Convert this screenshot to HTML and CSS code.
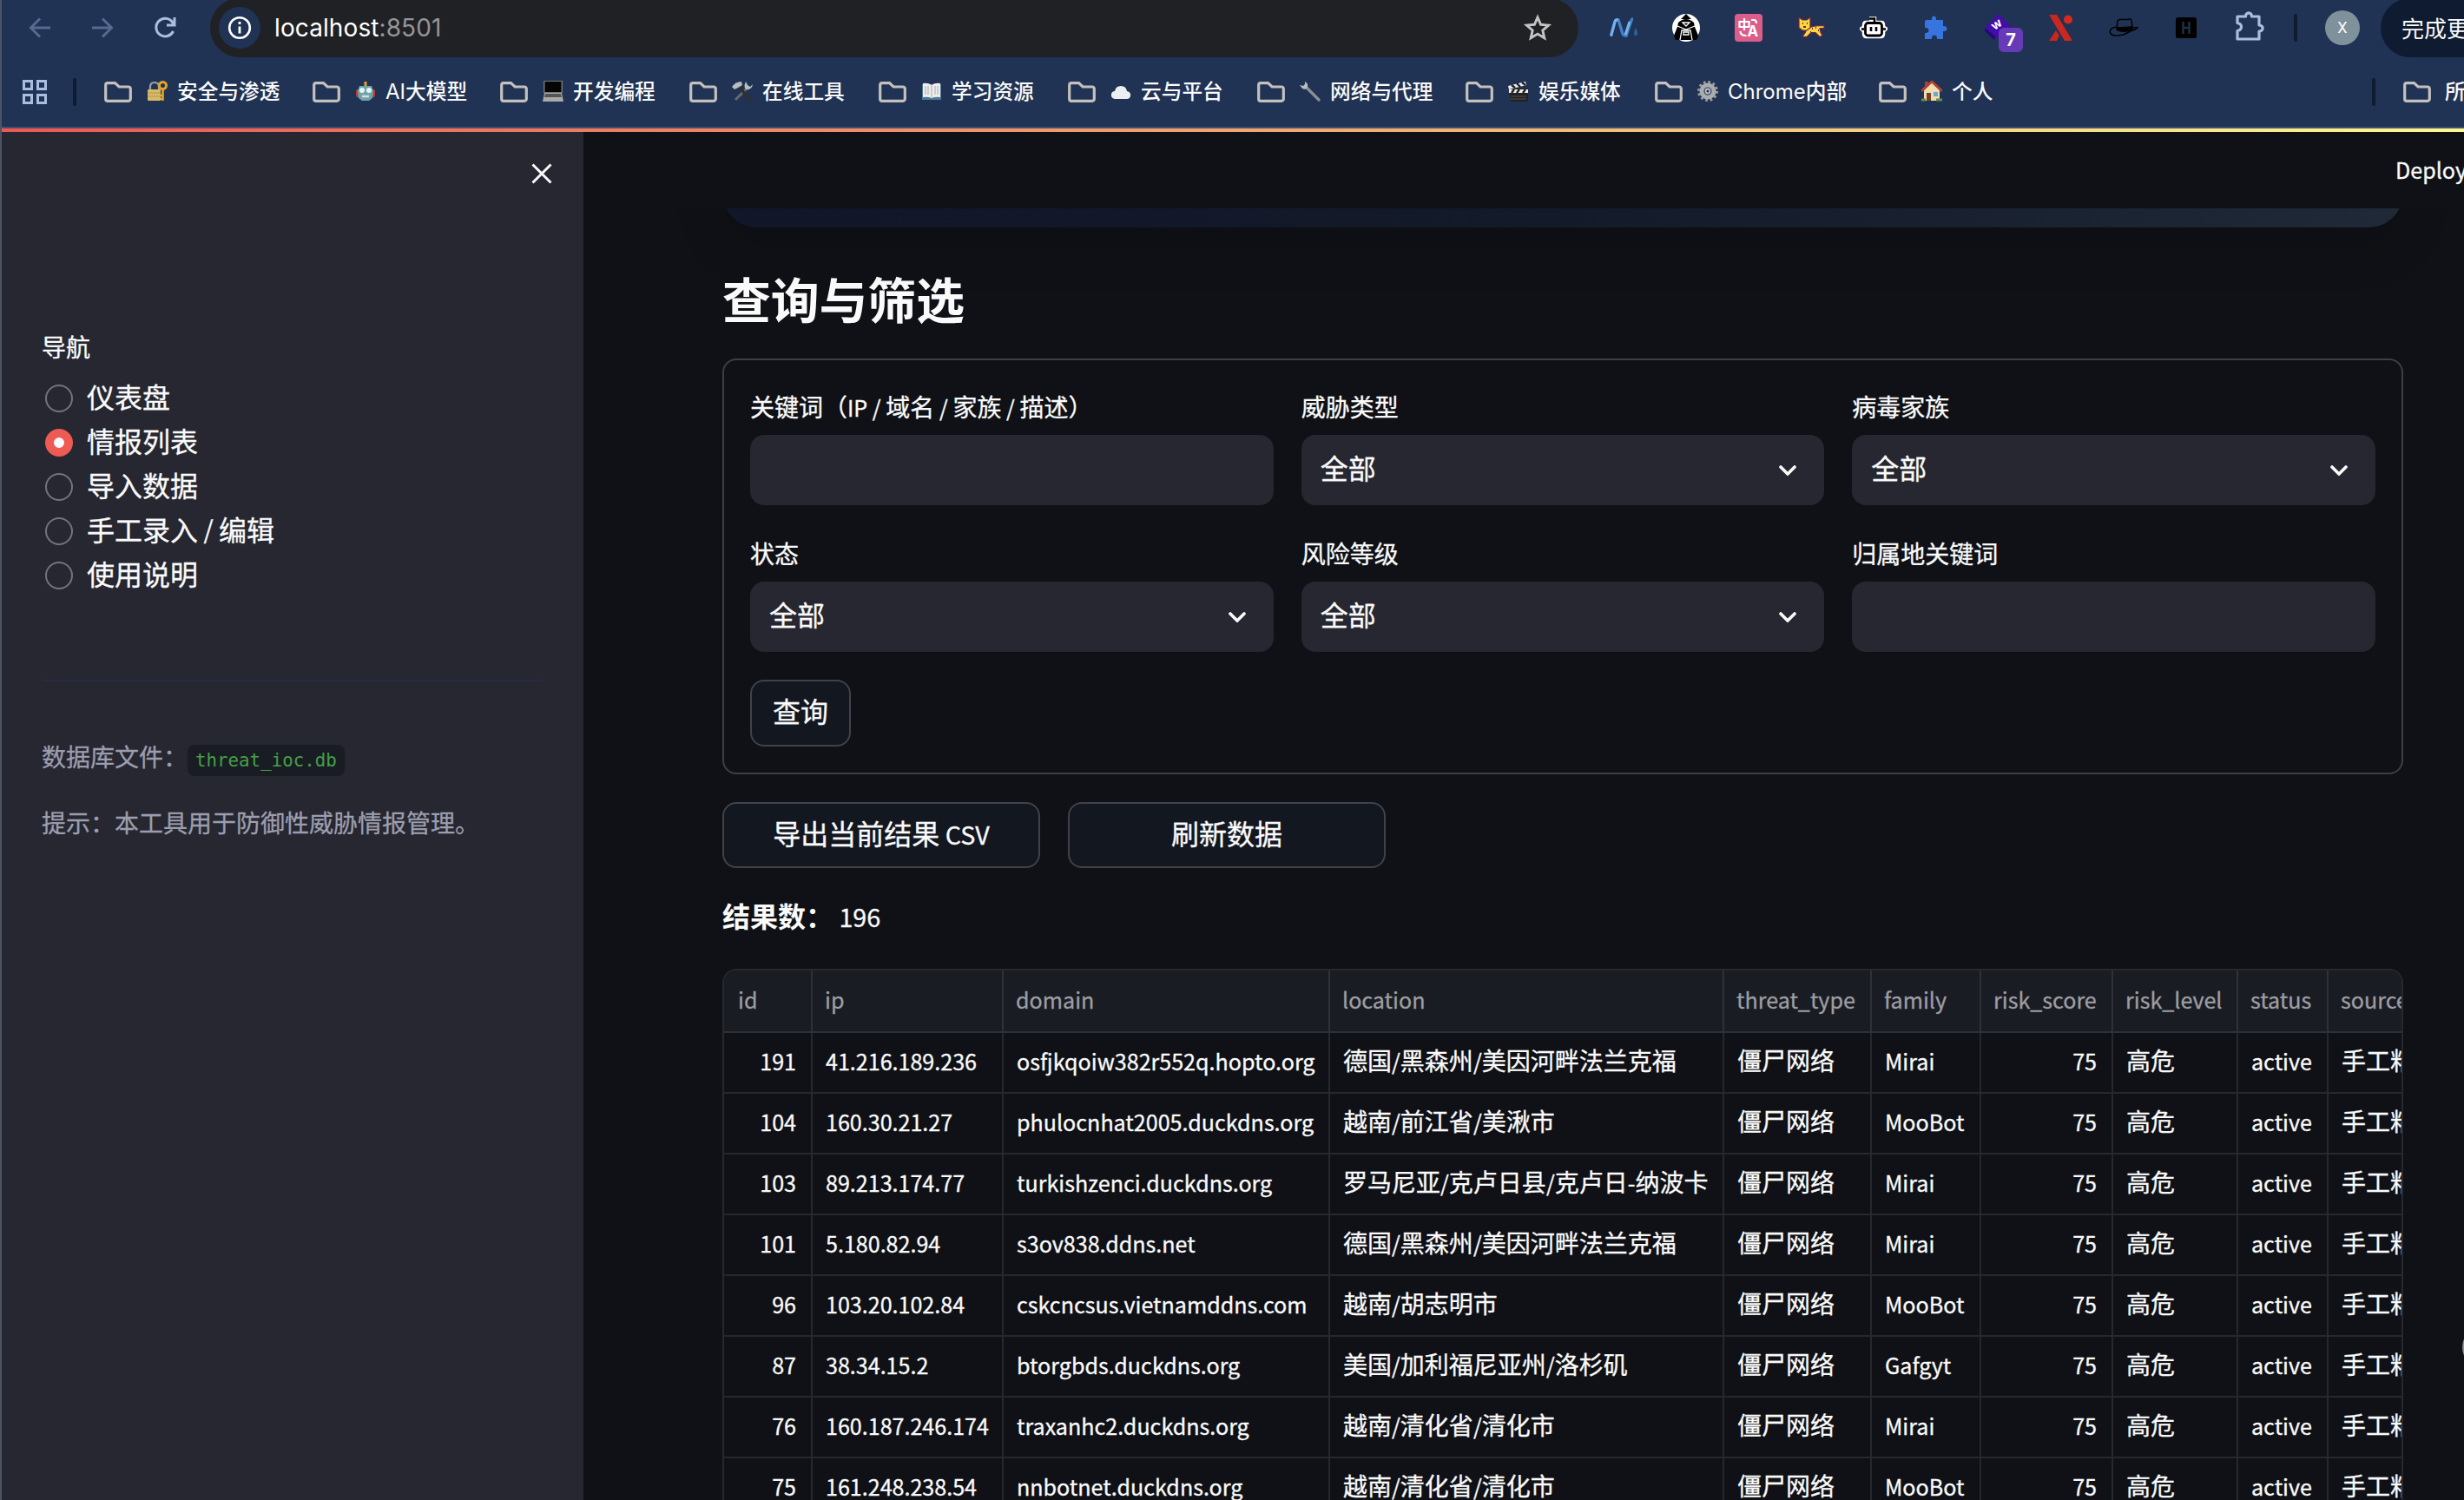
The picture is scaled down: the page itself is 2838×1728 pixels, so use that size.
FILE: index.html
```html
<!DOCTYPE html>
<html lang="zh-CN">
<head>
  <meta charset="UTF-8" />
  <meta name="viewport" content="width=device-width, initial-scale=1.0" />
  <title>威胁情报管理</title>
  <link rel="stylesheet" href="styles.css">
</head>
<body>
<svg class="symbols" width="0" height="0">
  <symbol id="folder" viewBox="0 0 32 24"><path d="M4 1.7h8.5l4.6 4.3H28a2.3 2.3 0 0 1 2.3 2.3V20a2.3 2.3 0 0 1-2.3 2.3H4A2.3 2.3 0 0 1 1.7 20V4A2.3 2.3 0 0 1 4 1.7z" fill="none" stroke="#c4c1bd" stroke-width="3.2"/></symbol>
  <symbol id="chevron" viewBox="0 0 20 12"><path d="M2 2l8 8 8-8" fill="none" stroke="#fafafa" stroke-width="3.6" stroke-linecap="round"/></symbol>
</svg>

<div class="window">
  <div class="toolbar">
    <div class="slot"><svg class="nav-icon dim" width="26" height="24" viewBox="0 0 26 24"><path d="M13 1.500L2.500 12 13 22.500M2.500 12H25"/></svg></div>
    <div class="slot"><svg class="nav-icon dim" width="26" height="24" viewBox="0 0 26 24"><path d="M13 1.500L23.500 12 13 22.500M23.500 12H1"/></svg></div>
    <div class="slot"><svg class="nav-icon" width="26" height="26" viewBox="0 0 26 26"><path d="M22.500 17A10.300 10.300 0 1 1 21.500 6.500L23.500 9M24 1v9h-9"/></svg></div>
    <div class="address">
      <span class="site-info"><svg width="28" height="28" viewBox="0 0 28 28"><circle cx="14" cy="14" r="11.800" fill="none" stroke="#fff" stroke-width="2.600"/><path d="M14 12.500v8M14 7v3" stroke="#fff" stroke-width="2.800"/></svg></span>
      <span class="url">localhost<em>:8501</em></span>
      <svg class="star" width="34" height="32" viewBox="0 0 34 32"><path d="M17 4l3.600 8.300 9 .8-6.800 5.900 2 8.800L17 23.100l-7.800 4.700 2-8.800-6.800-5.900 9-.8z" fill="none" stroke="#c4c4c4" stroke-width="2.900"/></svg>
    </div>
    <div class="extensions">
      <div class="slot"><svg width="32" height="24" viewBox="0 0 32 24"><path d="M1.500 21.500L6 5q1-3 4-2l5 16q1 2 4 2l5-15q1-4 3-4" fill="none" stroke="#3f82c8" stroke-width="3.400"/><path d="M1.500 21.500L6 5q1-3 4-2M18 20L23 5" fill="none" stroke="#76b2ee" stroke-width="3"/><path d="M30 12q4 9 0 9t0-9z" fill="#2a679f"/></svg></div>
      <div class="slot"><svg width="32" height="32" viewBox="0 0 32 32"><circle cx="16" cy="16" r="16" fill="#fff"/><path d="M10 6l6-6 6 6zM7 10q9-8 18 0l1 5 4 10-2 5H4l-2-5 4-10z"/><path d="M12 10h8l-4 4zM6 14l10 4 10-4M9 30l2-11h10l2 11M13 21h6v3h-6z" fill="none" stroke="#fff" stroke-width="1.300"/></svg></div>
      <div class="slot"><svg width="32" height="32" viewBox="0 0 32 32"><rect width="32" height="32" rx="4" fill="#db5d89"/><path d="M5.500 9h11v6h-11zM11 5v14M19 7h3q3 0 3 4M6.500 20q0 5 7 5" fill="none" stroke="#fff" stroke-width="2.200"/><text x="14.500" y="26" class="glyph glyph-a">A</text></svg></div>
      <div class="slot"><svg width="32" height="26" viewBox="0 0 32 26"><g fill="#f8d93c" stroke="#762345" stroke-width="1.200"><path d="M12 13l9-2 10-.5v3h-5l1 5 2 3-3 2-5-5-5 0-5 5-5-.5 3-4z"/><path d="M2 1l4 3h5l4-3v12l-4 3H6l-4-3z"/></g><path d="M6 8h1M11 8h1M7 12h3M17 14h1M21 13h1M24 16h1M15 18h1" stroke="#762345" stroke-width="2"/></svg></div>
      <div class="slot"><svg width="32" height="28" viewBox="0 0 32 28"><path d="M11 3.500h6V8M7 8h18q2 0 2 3v2l3 2-3 3v3q0 3-3 3H8q-3 0-3-3v-3l-3-3 3-2v-2q0-3 2-3z" fill="#fff" stroke="#fff" stroke-width="4.500"/><path d="M11 3.500h6V8M2 15.500h3M27 15.500h3" stroke="#000" stroke-width="2.500" fill="none"/><rect x="6.500" y="8.500" width="19" height="14.500" rx="3" fill="#fff" stroke="#000" stroke-width="2.800"/><path d="M13 13v5M19 13v5" stroke="#000" stroke-width="2.600"/></svg></div>
      <div class="slot"><svg width="28" height="28" viewBox="0 0 28 28"><path d="M3 5h6c-1-6 6-6 5 0h8v7c6-1 6 7 0 6v9h-7c1-6-7-6-6 0H1v-7c6 1 6-7 0-6V7q0-2 2-2z" fill="#3874e0"/></svg></div>
      <div class="slot badge-slot"><svg width="32" height="32" viewBox="0 0 32 32"><path d="M0 17L15 3v13l-4 14L0 20z" fill="#230a72"/><path d="M0 16L16 0l16 16-16 13z" fill="#430da7"/><text x="8" y="17" class="glyph glyph-w" transform="rotate(-35 13 13)">w</text></svg><span class="badge">7</span></div>
      <div class="slot"><svg width="30" height="32" viewBox="0 0 30 32"><path d="M1 1h9l18 30h-9z" fill="#c9281f"/><path d="M1 31l8-12 4 6-3 6z" fill="#c9281f"/><circle cx="23" cy="6.500" r="5" fill="#d52b1e"/></svg></div>
      <div class="slot"><svg width="34" height="22" viewBox="0 0 34 22"><path d="M9 11L10 3q1-2 4-1.500h8q3-1.500 4 .5l1 8z" fill="none" stroke="#000" stroke-width="1.500"/><path d="M9 9.500q9 3 18-.5l.5 5q-10 4-19 0z"/><path d="M8 10Q0 12 1.500 17q3 5 15 2 5-2 9-4.500 7-2 7.500-4l-5 .5" fill="none" stroke="#000" stroke-width="1.500"/></svg></div>
      <div class="slot"><svg width="24" height="24" viewBox="0 0 24 24"><rect width="24" height="24" rx="2.500"/><path d="M8.500 5v14M15.500 5v14M8.500 12h7" stroke="#223044" stroke-width="2.400"/></svg></div>
      <div class="slot"><svg class="puzzle" width="34" height="34" viewBox="0 0 34 34"><path d="M3 6h9.500c0-5.500 7-5.500 7 0H28v10c5.500 0 5.500 7 0 7v9H3v-9.500c6-1 6-8 0-9z" fill="none" stroke="#a9bee0" stroke-width="3.200" stroke-linejoin="round"/></svg></div>
    </div>
    <span class="divider"></span>
    <span class="avatar">X</span>
    <span class="update">完成更新</span>
  </div>

  <div class="bookmarks">
    <svg class="apps" width="28" height="28" viewBox="0 0 28 28"><path d="M1.500 1.500h9v9h-9zM17.500 1.500h9v9h-9zM1.500 17.500h9v9h-9zM17.500 17.500h9v9h-9z" fill="none" stroke="#a9bee0" stroke-width="3"/></svg>
    <span class="divider"></span>
    <div class="bookmark-list">
      <a class="bookmark"><svg class="folder"><use href="#folder"/></svg>
        <svg class="emoji" viewBox="0 0 24 24"><path d="M4 11V7q0-5 5-5t5 5v4" fill="none" stroke="#9da3a5" stroke-width="2.200"/><rect x="1" y="10" width="15" height="13" rx="1" fill="#d7ba66"/><path d="M1 14h15M1 18h15" stroke="#b2944a"/><circle cx="18.500" cy="5.500" r="4" fill="none" stroke="#e5a329" stroke-width="3"/><path d="M18.500 9v14M19 17h-3M19 21h-3" stroke="#e5a329" stroke-width="2.600"/></svg><span>安全与渗透</span></a>
      <a class="bookmark"><svg class="folder"><use href="#folder"/></svg>
        <svg class="emoji" viewBox="0 0 24 24"><path d="M12 1v6" stroke="#e0a22e" stroke-width="3"/><rect x="1" y="10" width="22" height="9" rx="2" fill="#c43b35"/><path d="M5 6h14l2 6-1 8-4 3H8l-4-3-1-8z" fill="#69a6ad"/><circle cx="8" cy="11" r="3" fill="#e8f5f6"/><circle cx="16" cy="11" r="3" fill="#e8f5f6"/><path d="M8 18h8" stroke="#e8d7d7" stroke-width="2.500"/></svg><span><span class="latin">AI</span>大模型</span></a>
      <a class="bookmark"><svg class="folder"><use href="#folder"/></svg>
        <svg class="emoji" viewBox="0 0 24 24"><path d="M1 0h22v14H1z" fill="#777"/><path d="M2.500 1h19v12h-19z" fill="#050505"/><path d="M2 14h20l2 10H0z" fill="#aaa"/><path d="M3 15h18l1 4H2z" fill="#555"/></svg><span>开发编程</span></a>
      <a class="bookmark"><svg class="folder"><use href="#folder"/></svg>
        <svg class="emoji" viewBox="0 0 24 24"><path d="M17 9L4 22" stroke="#656b70" stroke-width="3"/><path d="M8 6l13 17" stroke="#332f2c" stroke-width="3.400"/><path d="M0 7q4-6 11-6l1 4-5 3-4 2z" fill="#b7bec2"/><path d="M16 1q-3 6 0 9 7 1 8-6l-3 3-3-2z" fill="#b7bec2"/></svg><span>在线工具</span></a>
      <a class="bookmark"><svg class="folder"><use href="#folder"/></svg>
        <svg class="emoji" viewBox="0 0 24 24"><path d="M1 4h22v18H1z" fill="#4f7894"/><path d="M2 3q6-1 10 2 4-3 10-2v16q-6-1-10 1-4-2-10-1z" fill="#eee"/><path d="M12 5v14M5 6v10M8 6v10M16 6v10M19 6v10" stroke="#aaa"/></svg><span>学习资源</span></a>
      <a class="bookmark"><svg class="folder"><use href="#folder"/></svg>
        <svg class="emoji" viewBox="0 0 24 24"><path d="M5 21q-5-1-4-6 1-3 4-3 1-6 7-6t7 6q5 1 4 6-1 3-4 3z" fill="#eceff1"/></svg><span>云与平台</span></a>
      <a class="bookmark"><svg class="folder"><use href="#folder"/></svg>
        <svg class="emoji" viewBox="0 0 24 24"><path d="M7 7l15 15" stroke="#8e8f95" stroke-width="3.200" stroke-linecap="round"/><path d="M6 1q4 2 3 6t-6 2L0 5l4 1 2-2z" fill="#b7bec2"/></svg><span>网络与代理</span></a>
      <a class="bookmark"><svg class="folder"><use href="#folder"/></svg>
        <svg class="emoji" viewBox="0 0 24 24"><path d="M1 9h22v15H3z" fill="#222"/><path d="M0 6l20-5 1 4L1 10zM1 10h22v4H1z" fill="#eee"/><path d="M4 5l4 3M10 3l4 4M16 2l4 3M7 10l-3 4M13 10l-3 4M20 10l-3 4" stroke="#222" stroke-width="2.400"/><path d="M3 18h18M3 21h18" stroke="#555"/></svg><span>娱乐媒体</span></a>
      <a class="bookmark"><svg class="folder"><use href="#folder"/></svg>
        <svg class="emoji" viewBox="0 0 24 24"><circle cx="12" cy="12" r="10.500" fill="none" stroke="#9a9da0" stroke-width="3" stroke-dasharray="2.750 2.750"/><circle cx="12" cy="12" r="7" fill="none" stroke="#aaadb0" stroke-width="5"/><circle cx="12" cy="12" r="2.500" fill="none" stroke="#c0c3c5" stroke-width="1.800"/></svg><span><span class="latin">Chrome</span>内部</span></a>
      <a class="bookmark"><svg class="folder"><use href="#folder"/></svg>
        <svg class="emoji" viewBox="0 0 24 24"><path d="M3 11l9-9 9 9v12H3z" fill="#eddcb4"/><path d="M0 12L12 1l12 11" fill="none" stroke="#b5422f" stroke-width="2.800"/><path d="M4 1h4v5H4z" fill="#a8442f"/><path d="M6 14h5v9H6z" fill="#7b3d24"/><path d="M14 13h5v5h-5z" fill="#6aa7d2"/><path d="M0 22h5M17 22h7" stroke="#5c9440" stroke-width="3"/></svg><span>个人</span></a>
    </div>
    <span class="divider"></span>
    <a class="all-bookmarks"><svg class="folder"><use href="#folder"/></svg><span>所有书签</span></a>
  </div>

  <div class="decoration"></div>

  <div class="app">
    <aside class="sidebar">
      <div class="sidebar-header">
        <svg width="24" height="24" viewBox="0 0 24 24"><path d="M1.500 1.500l21 21M22.500 1.500l-21 21" stroke="#fafafa" stroke-width="3"/></svg>
      </div>
      <p class="nav-label">导航</p>
      <ul class="radio-group">
        <li><i class="radio"></i>仪表盘</li>
        <li><i class="radio checked"></i>情报列表</li>
        <li><i class="radio"></i>导入数据</li>
        <li><i class="radio"></i>手工录入<span class="en">&nbsp;/&nbsp;</span>编辑</li>
        <li><i class="radio"></i>使用说明</li>
      </ul>
      <hr>
      <p class="caption">数据库文件：<code>threat_ioc.db</code></p>
      <p class="caption">提示：本工具用于防御性威胁情报管理。</p>
    </aside>

    <main class="main">
      <header class="app-header"><span class="en">Deploy</span></header>
      <div class="hero-clip"><div class="hero"></div></div>
      <h2>查询与筛选</h2>

      <form class="filters">
        <div class="fields">
          <div class="field"><label>关键词（<span class="en">IP / </span>域名<span class="en"> / </span>家族<span class="en"> / </span>描述）</label><div class="input"></div></div>
          <div class="field"><label>威胁类型</label><div class="input"><span>全部</span><svg class="chevron"><use href="#chevron"/></svg></div></div>
          <div class="field"><label>病毒家族</label><div class="input"><span>全部</span><svg class="chevron"><use href="#chevron"/></svg></div></div>
          <div class="field"><label>状态</label><div class="input"><span>全部</span><svg class="chevron"><use href="#chevron"/></svg></div></div>
          <div class="field"><label>风险等级</label><div class="input"><span>全部</span><svg class="chevron"><use href="#chevron"/></svg></div></div>
          <div class="field"><label>归属地关键词</label><div class="input"></div></div>
        </div>
        <button type="button" class="btn btn-query">查询</button>
      </form>

      <div class="actions">
        <button type="button" class="btn">导出当前结果<span class="en">&nbsp;CSV</span></button>
        <button type="button" class="btn">刷新数据</button>
      </div>

      <p class="count"><b>结果数：</b><span class="en"> 196</span></p>

      <div class="table-wrap">
        <table>
          <colgroup>
            <col class="c-id"><col class="c-ip"><col class="c-domain"><col class="c-location"><col class="c-type">
            <col class="c-family"><col class="c-score"><col class="c-level"><col class="c-status"><col class="c-source">
          </colgroup>
          <thead>
            <tr><th>id</th><th>ip</th><th>domain</th><th>location</th><th>threat_type</th><th>family</th><th>risk_score</th><th>risk_level</th><th>status</th><th>source</th></tr>
          </thead>
          <tbody id="rows"></tbody>
        </table>
      </div>
    </main>
  </div>
  <span class="edge-handle"></span>
</div>

<script src="script.js"></script>
</body>
</html>
```

FILE: styles.css
```css
:root {
  --chrome: #203354;
  --chrome-dark: #0e1b31;
  --bg: #0f1116;
  --panel: #262730;
  --text: #fafafa;
  --line: #3e3f45;
  --grid: #27282e;
}

* {
  box-sizing: border-box;
}

body {
  margin: 0;
  background: var(--bg);
  color: var(--text);
  font-family: 'Noto Sans CJK SC', 'Noto Sans', sans-serif;
}

p, h2, ul {
  margin: 0;
  padding: 0;
}

.symbols {
  position: absolute;
}

.window {
  position: relative;
  width: 2838px;
  height: 1728px;
  overflow: hidden;
  border-left: 2px solid #4d5361;
}

/* latin runs are set a little smaller than the chinese around them */
.en {
  font-size: 0.896em;
  line-height: 1;
  white-space: pre;
}

/* browser toolbar */
.toolbar {
  display: flex;
  align-items: center;
  height: 66px;
  padding: 0 0 2px 8px;
  background: var(--chrome);
}

.slot {
  flex: none;
  display: flex;
  justify-content: center;
  align-items: center;
  width: 72px;
  height: 48px;
}

.nav-icon {
  fill: none;
  stroke: #a9bee0;
  stroke-width: 3;
}

.nav-icon.dim {
  stroke: #566b90;
}

.address {
  flex: none;
  display: flex;
  align-items: center;
  width: 1576px;
  height: 68px;
  margin: 0 16px;
  padding: 0 30px 0 10px;
  border-radius: 34px;
  background: #202124;
}

.site-info {
  display: flex;
  justify-content: center;
  align-items: center;
  width: 48px;
  height: 48px;
  border-radius: 50%;
  background: var(--chrome);
}

.url {
  margin-left: 16px;
  font: 28px Inter, sans-serif;
  letter-spacing: 0.1px;
  color: #fff;
}

.url em {
  font-style: normal;
  color: #949598;
}

.star {
  margin-left: auto;
}

.extensions {
  flex: none;
  display: flex;
}

.puzzle {
  margin: -4px 0 0 2px;
}

.glyph {
  font-family: Inter, sans-serif;
  font-weight: bold;
  fill: #fff;
}

.glyph-a { font-size: 17px; }
.glyph-w { font-size: 14px; }

.badge-slot {
  position: relative;
}

.badge {
  position: absolute;
  left: 36px;
  top: 24px;
  width: 28px;
  height: 28px;
  border-radius: 6px;
  background: #673ab7;
  font: bold 20px/28px Inter, sans-serif;
  text-align: center;
}

.divider {
  flex: none;
  width: 4px;
  height: 32px;
  border-radius: 2px;
  background: var(--chrome-dark);
}

.extensions + .divider {
  margin: 0 32px 0 16px;
}

.avatar {
  flex: none;
  width: 40px;
  height: 40px;
  margin-right: 24px;
  border-radius: 50%;
  background: #7f919b;
  font: 18px/40px Roboto, sans-serif;
  text-align: center;
}

.update {
  flex: none;
  width: 180px;
  height: 68px;
  padding-left: 24px;
  border-radius: 34px;
  background: var(--chrome-dark);
  font-size: 26px;
  line-height: 68px;
}

/* bookmarks bar */
.bookmarks {
  display: flex;
  align-items: center;
  height: 82px;
  padding-left: 24px;
  background: var(--chrome);
  border-bottom: 2px solid #435170;
  font-size: 23.7px;
  font-weight: 500;
  white-space: nowrap;
}

.apps {
  flex: none;
}

.bookmarks > .divider {
  margin: 0 32px 0 30px;
}

.bookmark-list {
  flex: none;
  display: grid;
  grid-template-columns: 240px 216px 218px 218px 218px 218px 240px 218px 258px 140px;
  width: 2612px;
}

.bookmark, .all-bookmarks {
  display: flex;
  align-items: center;
}

.bookmark > span, .all-bookmarks > span {
  padding-bottom: 4px;
}

.folder {
  flex: none;
  width: 32px;
  height: 24px;
}

.emoji {
  flex: none;
  width: 24px;
  height: 24px;
  margin: 0 11px 2px 17px;
}

.latin {
  font-family: Inter, sans-serif;
  font-size: 24px;
  font-weight: 400;
}

.bookmarks > .bookmark-list + .divider {
  margin-left: 0;
}

.all-bookmarks {
  flex: none;
  width: 200px;
  gap: 16px;
}

.decoration {
  height: 4px;
  background: linear-gradient(90deg, #ef5753, #f09c6c 45%, #f3c57b 70%, #fcf890);
}

/* sidebar */
.app {
  display: flex;
  height: 1576px;
  -webkit-text-stroke: 0.3px;
}

.sidebar {
  flex: none;
  width: 670px;
  padding: 0 48px 0 46px;
  background: var(--panel);
}

.sidebar-header {
  display: flex;
  justify-content: flex-end;
  align-items: center;
  height: 96px;
  margin-right: -12px;
}

.nav-label {
  margin-top: 131px;
  font-size: 28px;
  line-height: 40px;
}

.radio-group {
  margin-top: 13px;
  list-style: none;
  font-size: 32px;
}

.radio-group li {
  display: flex;
  align-items: center;
  height: 51.2px;
  padding: 0 0 4px 4px;
}

.radio {
  width: 32px;
  height: 32px;
  margin: 6px 16px 0 0;
  border: 2px solid #74757b;
  border-radius: 50%;
}

.radio.checked {
  border: 10px solid #ee5a54;
  background: var(--text);
}

.sidebar hr {
  height: 2px;
  margin: 95px 0 64px;
  border: 0;
  background: #272c41;
}

.caption {
  height: 44px;
  margin-bottom: 32px;
  color: #9c9eaf;
  font-size: 28px;
  line-height: 44px;
}

.caption code {
  display: inline-block;
  height: 36px;
  padding: 0 9px;
  border-radius: 8px;
  background: #1a1c24;
  color: #43a047;
  font: 20.8px/36px 'DejaVu Sans Mono', monospace;
  vertical-align: 0;
  -webkit-text-stroke: 0;
}

/* main */
.main {
  width: 2096px;
  padding-left: 160px;
}

.app-header {
  height: 88px;
  margin-right: -73px;
  padding-top: 18px;
  text-align: right;
  font-size: 28px;
  line-height: 48px;
}

.hero-clip {
  display: flex;
  align-items: flex-end;
  height: 22px;
  clip-path: inset(0 -100px -100px -100px);
}

.hero {
  flex: 1;
  height: 100px;
  border-radius: 40px;
  background: linear-gradient(100deg, #111629, #131a29 50%, #1f2937);
  box-shadow: 0 20px 60px rgba(0, 0, 0, 0.14);
}

h2 {
  margin: 45px 0 34px;
  font-size: 55.8px;
  line-height: 72px;
  font-weight: bold;
  -webkit-text-stroke: 0;
}

.filters {
  padding: 33px 30px 30px;
  border: 2px solid var(--line);
  border-radius: 16px;
}

.fields {
  display: grid;
  grid-template-columns: repeat(3, 1fr);
  gap: 35px 32px;
}

.field label {
  display: block;
  margin-bottom: 13px;
  font-size: 28px;
  line-height: 40px;
}

.input {
  display: flex;
  justify-content: space-between;
  align-items: center;
  height: 81px;
  padding: 0 32px 0 22px;
  border-radius: 16px;
  background: var(--panel);
  font-size: 32px;
}

.input span {
  padding-bottom: 7px;
}

.chevron {
  width: 20px;
  height: 12px;
}

.btn {
  width: 366px;
  height: 76px;
  padding: 0 0 7px;
  border: 2px solid #414249;
  border-radius: 16px;
  background: #131720;
  color: var(--text);
  font-family: inherit;
  font-size: 32px;
  -webkit-text-stroke: inherit;
}

.btn-query {
  display: block;
  width: 116px;
  height: 77px;
  margin-top: 32px;
}

.actions {
  display: flex;
  gap: 32px;
  margin-top: 32px;
}

.count {
  height: 48px;
  margin: 30px 0 38px;
  font-size: 32px;
  line-height: 48px;
}

.count b {
  -webkit-text-stroke: 0;
}

/* results table */
.table-wrap {
  height: 700px;
  overflow: hidden;
  border: 2px solid var(--grid);
  border-radius: 16px;
}

table {
  width: 1990px;
  table-layout: fixed;
  border-collapse: separate;
  border-spacing: 0;
  font-size: 28px;
}

.c-id { width: 102px; }
.c-ip { width: 220px; }
.c-domain { width: 376px; }
.c-location { width: 454px; }
.c-type { width: 170px; }
.c-family { width: 126px; }
.c-score { width: 152px; }
.c-level { width: 144px; }
.c-status { width: 104px; }
.c-source { width: 142px; }

th, td {
  height: 70px;
  padding: 0 0 7px 15px;
  border-right: 2px solid var(--grid);
  border-bottom: 2px solid var(--grid);
  line-height: 40px;
  text-align: left;
  white-space: nowrap;
}

th {
  height: 72px;
  padding: 0 0 4px 14px;
  border-color: #303138;
  background: #1a1c24;
  color: #9d9ea2;
  font-size: 25.1px;
  font-weight: normal;
}

th:first-child {
  padding-left: 16px;
}

td.num {
  padding: 0 17px 7px 0;
  text-align: right;
}

/* handle of the collapsed side panel, mostly past the right edge */
.edge-handle {
  position: absolute;
  right: -46px;
  top: 1528px;
  width: 48px;
  height: 48px;
  border-radius: 50%;
  background: #8c8d90;
}
```

FILE: script.js
```js
const rows = [
  [191, "41.216.189.236", "osfjkqoiw382r552q.hopto.org", "德国/黑森州/美因河畔法兰克福", "Mirai"],
  [104, "160.30.21.27", "phulocnhat2005.duckdns.org", "越南/前江省/美湫市", "MooBot"],
  [103, "89.213.174.77", "turkishzenci.duckdns.org", "罗马尼亚/克卢日县/克卢日-纳波卡", "Mirai"],
  [101, "5.180.82.94", "s3ov838.ddns.net", "德国/黑森州/美因河畔法兰克福", "Mirai"],
  [96, "103.20.102.84", "cskcncsus.vietnamddns.com", "越南/胡志明市", "MooBot"],
  [87, "38.34.15.2", "btorgbds.duckdns.org", "美国/加利福尼亚州/洛杉矶", "Gafgyt"],
  [76, "160.187.246.174", "traxanhc2.duckdns.org", "越南/清化省/清化市", "Mirai"],
  [75, "161.248.238.54", "nnbotnet.duckdns.org", "越南/清化省/清化市", "MooBot"]
];

// wrap latin runs so they get the smaller size
function latin(value) {
  return String(value).replace(/[\x21-\x7e]+/g, '<span class="en">$&</span>');
}

document.getElementById("rows").innerHTML = rows.map(([id, ip, domain, location, family]) => {
  const cells = [id, ip, domain, location, "僵尸网络", family, 75, "高危", "active", "手工粘贴"];
  return "<tr>" + cells.map((c) =>
    `<td${typeof c === "number" ? ' class="num"' : ""}>${latin(c)}</td>`
  ).join("") + "</tr>";
}).join("");
```
